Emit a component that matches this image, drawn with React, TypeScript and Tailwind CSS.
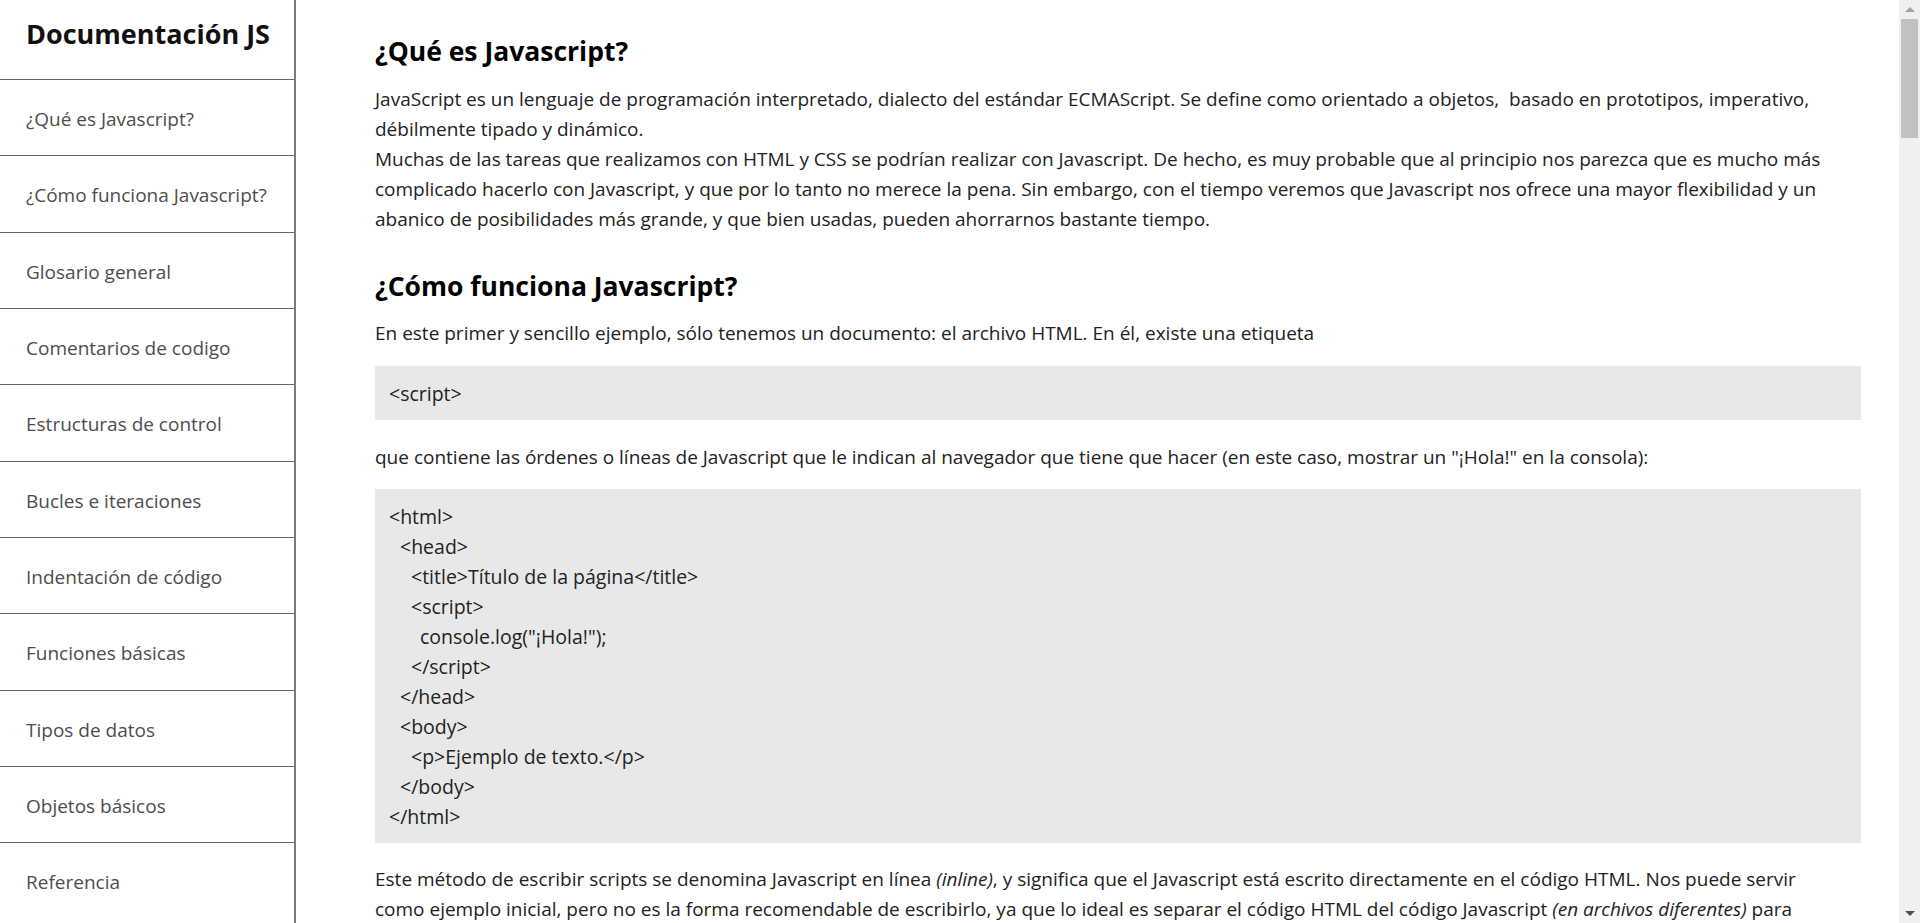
import React from 'react';

const navItems = [
    '¿Qué es Javascript?',
    '¿Cómo funciona Javascript?',
    'Glosario general',
    'Comentarios de codigo',
    'Estructuras de control',
    'Bucles e iteraciones',
    'Indentación de código',
    'Funciones básicas',
    'Tipos de datos',
    'Objetos básicos',
    'Referencia',
];

// indent in px for each line of the html example
const htmlExample: { text: string; indent: string }[] = [
    { text: '<html>', indent: 'pl-0' },
    { text: '<head>', indent: 'pl-[11px]' },
    { text: '<title>Título de la página</title>', indent: 'pl-[22px]' },
    { text: '<script>', indent: 'pl-[22px]' },
    { text: 'console.log("¡Hola!");', indent: 'pl-[31px]' },
    { text: '</script>', indent: 'pl-[22px]' },
    { text: '</head>', indent: 'pl-[11px]' },
    { text: '<body>', indent: 'pl-[11px]' },
    { text: '<p>Ejemplo de texto.</p>', indent: 'pl-[22px]' },
    { text: '</body>', indent: 'pl-[11px]' },
    { text: '</html>', indent: 'pl-0' },
];

const Sidebar: React.FC = () => (
    <nav className="w-[296px] shrink-0 border-r-2 border-[#7a7a7a] bg-white h-full overflow-hidden">
        <header className="h-[79px] flex items-center pl-[26px] pb-[11px]">
            <h1 className="text-[27px] font-bold text-[#111]">Documentación JS</h1>
        </header>
        <ul>
            {navItems.map(item => (
                <li key={item} className="h-[76.33px] border-t border-[#666] flex items-center pl-[26px] pt-[3px]">
                    <a href="#" className="text-[19px] text-[#4d4d4d]">{item}</a>
                </li>
            ))}
        </ul>
    </nav>
);

const Scrollbar: React.FC = () => (
    <div className="w-[21px] shrink-0 bg-[#f0f0f0] h-full flex flex-col items-center">
        <div className="h-[19px] flex items-center justify-center">
            <div className="w-0 h-0 border-l-[5px] border-r-[5px] border-b-[5px] border-l-transparent border-r-transparent border-b-[#a3a3a3]" />
        </div>
        <div className="w-[17px] h-[119px] bg-[#c1c1c1]" />
        <div className="flex-1" />
        <div className="h-[19px] flex items-center justify-center">
            <div className="w-0 h-0 border-l-[5px] border-r-[5px] border-t-[5px] border-l-transparent border-r-transparent border-t-[#505050]" />
        </div>
    </div>
);

export default function App() {
    return (
        <div className="h-screen w-full flex overflow-hidden bg-white text-[#222]" style={{ fontFamily: '"Open Sans", "Noto Sans", sans-serif' }}>
            <Sidebar />
            <main className="flex-1 h-full overflow-hidden pl-[79px] pr-[38px] pt-[33px]">
                <section>
                    <h2 className="text-[26.5px] leading-[36px] font-bold text-black">¿Qué es Javascript?</h2>
                    <p className="mt-[15px] pr-[16px] text-[19px] leading-[30px]">
                        JavaScript es un lenguaje de programación interpretado, dialecto del estándar ECMAScript. Se define como orientado a objetos,{'\u00a0'} basado en prototipos, imperativo, débilmente tipado y dinámico.
                        <br />
                        Muchas de las tareas que realizamos con HTML y CSS se podrían realizar con Javascript. De hecho, es muy probable que al principio nos parezca que es mucho más complicado hacerlo con Javascript, y que por lo tanto no merece la pena. Sin embargo, con el tiempo veremos que Javascript nos ofrece una mayor flexibilidad y un abanico de posibilidades más grande, y que bien usadas, pueden ahorrarnos bastante tiempo.
                    </p>
                </section>
                <section className="mt-[34px]">
                    <h2 className="text-[26.5px] leading-[36px] font-bold text-black">¿Cómo funciona Javascript?</h2>
                    <p className="mt-[14px] pr-[16px] text-[19px] leading-[30px]">
                        En este primer y sencillo ejemplo, sólo tenemos un documento: el archivo HTML. En él, existe una etiqueta
                    </p>
                    <div className="mt-[18px] bg-[#e8e8e8] pl-[14px] pt-[13px] pb-[11px] text-[19.5px] leading-[30px]">
                        {'<script>'}
                    </div>
                    <p className="mt-[22px] pr-[16px] text-[19px] leading-[30px]">
                        que contiene las órdenes o líneas de Javascript que le indican al navegador que tiene que hacer (en este caso, mostrar un "¡Hola!" en la consola):
                    </p>
                    <div className="mt-[17px] bg-[#e8e8e8] pl-[14px] pt-[13px] pb-[11px] text-[19.5px] leading-[30px]">
                        {htmlExample.map((line, i) => (
                            <div key={i} className={line.indent}>{line.text}</div>
                        ))}
                    </div>
                    <p className="mt-[21px] pr-[16px] text-[19px] leading-[30px]">
                        Este método de escribir scripts se denomina Javascript en línea <em>(inline)</em>, y significa que el Javascript está escrito directamente en el código HTML. Nos puede servir como ejemplo inicial, pero no es la forma recomendable de escribirlo, ya que lo ideal es separar el código HTML del código Javascript <em>(en archivos diferentes)</em> para organizarnos mejor y poder reutilizar el código en varias páginas.
                    </p>
                </section>
            </main>
            <Scrollbar />
        </div>
    );
}
